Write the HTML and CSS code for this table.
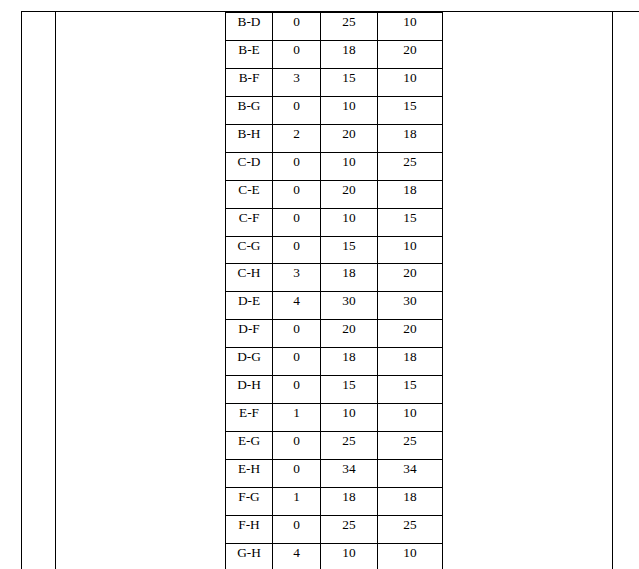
FILE: index.html
```html
<!DOCTYPE html>
<html>
<head>
<meta charset="utf-8">
<link rel="stylesheet" href="styles.css">
</head>
<body>
<div class="frame">
  <div class="col col-a"></div>
  <div class="col col-b">
    <div class="grid">
      <div class="c">B-D</div><div class="c">0</div><div class="c">25</div><div class="c">10</div>
      <div class="c">B-E</div><div class="c">0</div><div class="c">18</div><div class="c">20</div>
      <div class="c">B-F</div><div class="c">3</div><div class="c">15</div><div class="c">10</div>
      <div class="c">B-G</div><div class="c">0</div><div class="c">10</div><div class="c">15</div>
      <div class="c">B-H</div><div class="c">2</div><div class="c">20</div><div class="c">18</div>
      <div class="c">C-D</div><div class="c">0</div><div class="c">10</div><div class="c">25</div>
      <div class="c">C-E</div><div class="c">0</div><div class="c">20</div><div class="c">18</div>
      <div class="c">C-F</div><div class="c">0</div><div class="c">10</div><div class="c">15</div>
      <div class="c">C-G</div><div class="c">0</div><div class="c">15</div><div class="c">10</div>
      <div class="c">C-H</div><div class="c">3</div><div class="c">18</div><div class="c">20</div>
      <div class="c">D-E</div><div class="c">4</div><div class="c">30</div><div class="c">30</div>
      <div class="c">D-F</div><div class="c">0</div><div class="c">20</div><div class="c">20</div>
      <div class="c">D-G</div><div class="c">0</div><div class="c">18</div><div class="c">18</div>
      <div class="c">D-H</div><div class="c">0</div><div class="c">15</div><div class="c">15</div>
      <div class="c">E-F</div><div class="c">1</div><div class="c">10</div><div class="c">10</div>
      <div class="c">E-G</div><div class="c">0</div><div class="c">25</div><div class="c">25</div>
      <div class="c">E-H</div><div class="c">0</div><div class="c">34</div><div class="c">34</div>
      <div class="c">F-G</div><div class="c">1</div><div class="c">18</div><div class="c">18</div>
      <div class="c">F-H</div><div class="c">0</div><div class="c">25</div><div class="c">25</div>
      <div class="c">G-H</div><div class="c">4</div><div class="c">10</div><div class="c">10</div>
    </div>
  </div>
  <div class="col col-c"></div>
</div>
</body>
</html>
```

FILE: styles.css
```css
html, body {
  margin: 0;
  padding: 0;
  overflow: hidden;
  background: #fff;
}
body {
  width: 639px;
  height: 569px;
  font-family: "Liberation Serif", "Times New Roman", serif;
  font-size: 13.33px;
  color: #000;
}
.frame {
  box-sizing: border-box;
  display: flex;
  margin: 11px 0 0 21px;
  width: 618px;
  height: 558px;
  overflow: hidden;
  border-top: 1px solid #000;
  border-left: 1px solid #000;
}
.col {
  flex: none;
  overflow: hidden;
}
.col-a {
  width: 33px;
  border-right: 1px solid #000;
}
.col-b {
  width: 556px;
  border-right: 1px solid #000;
  display: flex;
  justify-content: center;
  align-items: flex-start;
}
.col-c {
  width: 26px;
}
.grid {
  flex: none;
  display: grid;
  grid-template-columns: 47px 48px 57px 65px;
  grid-auto-rows: 27.94px;
  border-top: 1px solid #000;
  border-left: 1px solid #000;
}
.c {
  box-sizing: border-box;
  border-right: 1px solid #000;
  border-bottom: 1px solid #000;
  text-align: center;
  line-height: 15px;
  padding-top: 1px;
}
```
